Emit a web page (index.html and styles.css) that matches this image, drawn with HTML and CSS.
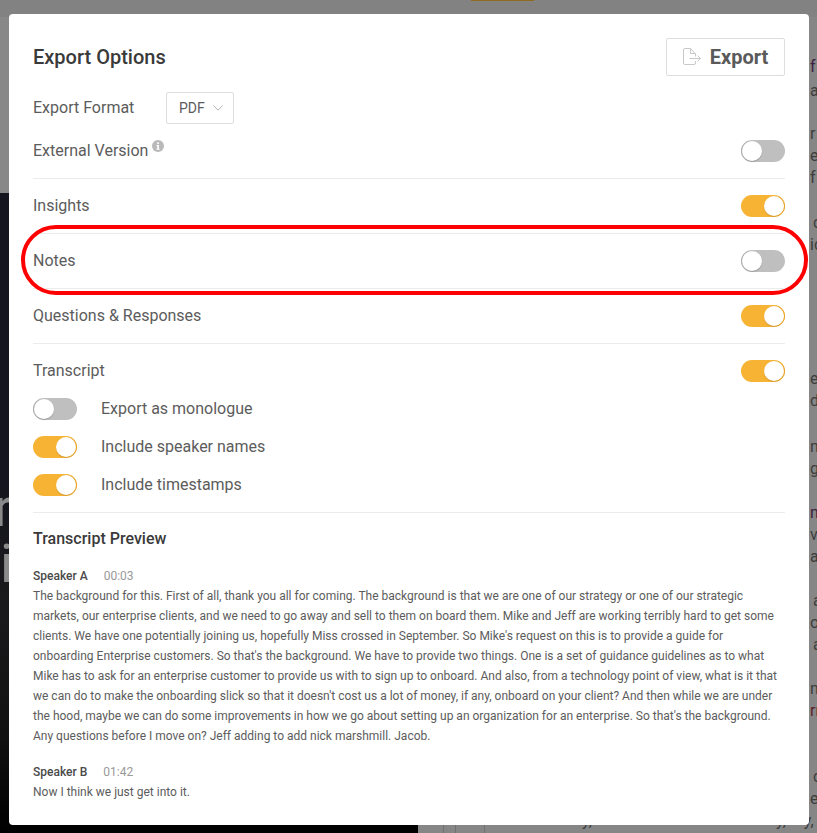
FILE: index.html
```html
<!DOCTYPE html>
<html lang="en">
<head>
<meta charset="utf-8">
<title>Export Options</title>
<link rel="stylesheet" href="styles.css">
</head>
<body>
<div class="backdrop">
  <div class="topbar"><span class="tab"></span></div>
  <div class="bg-main">
    <div class="bg-left">
      <div class="bg-left-top"></div>
      <div class="video"><span class="video-text">r<br>i</span></div>
    </div>
    <div class="bg-right">
      <div class="frag-group g1"><p><b class="purple">f</b></p><p>a</p></div>
      <div class="frag-group g2"><p>r <b class="blue">c</b></p><p>e</p><p>f <b class="maroon">r</b></p></div>
      <div class="frag-group g3"><p class="in">c</p><p>ic</p></div>
      <div class="frag-group g4"><p>e</p><p>d <b class="amber">c</b></p></div>
      <div class="frag-group g5"><p>n</p><p>g</p></div>
      <div class="frag-group g7"><p><b class="purple">n</b></p><p>v</p><p>a</p></div>
      <div class="frag-group g7"><p class="in">a</p><p>or</p><p class="in">a</p></div>
      <div class="frag-group g7"><p>nu</p><p><b class="maroon">rr</b></p></div>
      <div class="frag-group g6"><p class="in">c</p><p>ee</p><p class="tail"><span>y,</span><span class="far">y,</span><span>y,</span></p></div>
      <div class="columns"><i></i><i></i><i></i></div>
    </div>
  </div>
</div>

<section class="modal">
  <header class="modal-head">
    <h1 class="title">Export Options</h1>
    <button class="export-btn" type="button">
      <svg class="export-icon" viewBox="0 0 18 18" width="18" height="18" fill="none" stroke="#c9c9c9" stroke-width="1">
        <path d="M12.500 8.500V6L7.500 .5H2A1.500 1.500 0 0 0 .5 2V15A1.500 1.500 0 0 0 2 16.500H11A1.500 1.500 0 0 0 12.500 15V13"/>
        <path d="M7.500 .5V5.500H12.500"/>
        <path d="M6.500 10.500H17.500M14.500 7.500L17.500 10.500L14.500 13.500"/>
      </svg>
      <span>Export</span>
    </button>
  </header>

  <div class="format-row">
    <span class="label format-label">Export Format</span>
    <div class="select">
      <span>PDF</span>
      <svg viewBox="0 0 10 6" width="10" height="6" fill="none" stroke="#b5b5b5" stroke-width="1"><path d="M.5 .5L5 5.200L9.500 .5"/></svg>
    </div>
  </div>

  <div class="row ruled">
    <span class="label">External Version<svg class="info" viewBox="0 0 12 12" width="12" height="12"><circle cx="6" cy="6" r="6" fill="#b9b9b9"/><rect x="5.200" y="2.400" width="1.700" height="1.700" fill="#fff"/><path d="M4.600 5H6.900V8.700H7.600V9.700H4.500V8.700H5.200V6H4.600Z" fill="#fff"/></svg></span>
    <span class="toggle"></span>
  </div>
  <div class="row ruled">
    <span class="label">Insights</span>
    <span class="toggle on"></span>
  </div>
  <div class="row ruled">
    <span class="label">Notes</span>
    <span class="toggle"></span>
  </div>
  <div class="row ruled">
    <span class="label">Questions &amp; Responses</span>
    <span class="toggle on"></span>
  </div>

  <div class="transcript-group">
    <div class="row">
      <span class="label">Transcript</span>
      <span class="toggle on"></span>
    </div>
    <div class="sub-list">
      <div class="sub-row"><span class="toggle"></span><span class="label">Export as monologue</span></div>
      <div class="sub-row"><span class="toggle on"></span><span class="label">Include speaker names</span></div>
      <div class="sub-row"><span class="toggle on"></span><span class="label">Include timestamps</span></div>
    </div>
  </div>

  <h2 class="preview-title">Transcript Preview</h2>

  <article class="utterance">
    <div class="speaker"><strong>Speaker A</strong><time>00:03</time></div>
    <p>The background for this. First of all, thank you all for coming. The background is that we are one of our strategy or one of our strategic<br>markets, our enterprise clients, and we need to go away and sell to them on board them. Mike and Jeff are working terribly hard to get some<br>clients. We have one potentially joining us, hopefully Miss crossed in September. So Mike's request on this is to provide a guide for<br>onboarding Enterprise customers. So that's the background. We have to provide two things. One is a set of guidance guidelines as to what<br>Mike has to ask for an enterprise customer to provide us with to sign up to onboard. And also, from a technology point of view, what is it that<br>we can do to make the onboarding slick so that it doesn't cost us a lot of money, if any, onboard on your client? And then while we are under<br>the hood, maybe we can do some improvements in how we go about setting up an organization for an enterprise. So that's the background.<br>Any questions before I move on? Jeff adding to add nick marshmill. Jacob.</p>
  </article>
  <article class="utterance second">
    <div class="speaker"><strong>Speaker B</strong><time>01:42</time></div>
    <p>Now I think we just get into it.</p>
  </article>

  <div class="highlight-ring"></div>
</section>
</body>
</html>
```

FILE: styles.css
```css
* { box-sizing: border-box; }
html, body { margin: 0; padding: 0; }
body {
  width: 817px;
  height: 833px;
  overflow: hidden;
  position: relative;
  font-family: Roboto, "Liberation Sans", sans-serif;
  background: #868686;
}

/* dimmed page behind the dialog */
.backdrop { height: 833px; display: flex; flex-direction: column; background: #868686; }
.topbar { height: 17px; flex: none; background: #828282; padding-left: 471px; }
.tab { display: block; width: 63px; height: 1px; background: #8f6a1f; }
.bg-main { flex: 1; display: flex; min-height: 0; }
.bg-left { width: 418px; flex: none; display: flex; flex-direction: column; }
.bg-left-top { height: 176px; flex: none; background: #888; }
.video {
  flex: 1;
  background: linear-gradient(#15151f 0, #15151f 45%, #1a1a1c 65%, #111 85%, #000 100%);
  color: #8a8a8a;
  overflow: hidden;
  font-size: 54px;
  line-height: 56px;
  padding-top: 287px;
  text-indent: -6px;
}
.video-text { display: block; }
.bg-right {
  flex: 1;
  position: relative;
  overflow: hidden;
  padding-left: 392px;
  color: #3d3d3d;
  font-size: 16px;
  line-height: 22px;
  white-space: nowrap;
}
.frag-group p { margin: 0; height: 22px; }
.frag-group b { font-weight: 400; }
.frag-group .in { padding-left: 3px; }
.g1 { margin-top: 39px; }
.g1 p + p { margin-top: 2px; }
.g2 { margin-top: 21px; }
.g3 { margin-top: 23px; }
.g4 { margin-top: 112px; }
.g5 { margin-top: 24px; }
.g7 { margin-top: 22px; }
.g6 { margin-top: 44px; }
.purple { color: #3b2040; }
.blue { color: #2f3f55; }
.maroon { color: #5a1f2c; }
.amber { color: #7a5a1c; }
.frag-group .tail { margin-left: -228px; display: flex; }
.frag-group .tail .far { margin: 0 18px 0 184px; }
.columns { position: absolute; left: 25px; bottom: 0; width: 42px; height: 8px; display: flex; justify-content: space-between; }
.columns i { width: 1px; background: #707070; }
.columns i:nth-child(2) { margin-left: -18px; }

/* dialog */
.modal {
  position: absolute;
  left: 9px;
  top: 14px;
  width: 800px;
  height: 811px;
  padding: 24px;
  background: #fff;
  border-radius: 4px;
  color: #5c5c5c;
}
.modal-head { display: flex; align-items: center; justify-content: space-between; height: 38px; }
.title { margin: 0; font-size: 20px; font-weight: 500; color: #3a3a3a; }
.export-btn {
  width: 119px;
  height: 38px;
  display: flex;
  align-items: center;
  justify-content: center;
  gap: 9px;
  padding: 0;
  background: #fff;
  border: 1px solid #dedede;
  border-radius: 2px;
  color: #5a5a5a;
  font: 700 20px Roboto, sans-serif;
}
.export-icon { flex: none; }
.format-row { display: flex; align-items: center; margin-top: 16px; height: 32px; }
.format-label { width: 133px; }
.select {
  width: 68px;
  height: 32px;
  display: flex;
  align-items: center;
  gap: 8px;
  padding-left: 12px;
  border: 1px solid #dedede;
  border-radius: 2px;
  font-size: 14px;
  color: #5c5c5c;
}
.label { font-size: 16px; line-height: 22px; color: #5c5c5c; }
.info { margin-left: 4px; vertical-align: 4px; }
.row { display: flex; align-items: center; justify-content: space-between; padding: 16px 0; }
.ruled { border-bottom: 1px solid #ececec; }
.transcript-group { border-bottom: 1px solid #ececec; padding-bottom: 16px; }
.sub-list { display: flex; flex-direction: column; gap: 16px; }
.sub-row { display: flex; align-items: center; gap: 24px; }

.toggle {
  display: block;
  flex: none;
  position: relative;
  width: 44px;
  height: 22px;
  border-radius: 11px;
  background: #bfbfbf;
}
.toggle::after {
  content: "";
  position: absolute;
  top: 1px;
  left: 1px;
  width: 20px;
  height: 20px;
  border-radius: 50%;
  background: #fff;
  box-shadow: -1px 0 0 #a9a9a9, 0 1px 1px rgba(0,0,0,.2);
}
.toggle.on { background: #f7b334; }
.toggle.on::after { left: 23px; box-shadow: 1px 0 0 #e5a228, 0 1px 1px rgba(0,0,0,.15); }

.preview-title { margin: 16px 0 0; font-size: 16px; line-height: 20px; font-weight: 500; color: #3a3a3a; }
.utterance { margin-top: 17px; font-size: 12px; line-height: 20px; color: #5c5c5c; }
.utterance.second { margin-top: 16px; }
.utterance p { margin: 0; white-space: nowrap; }
.speaker { display: flex; gap: 16px; }
.speaker strong { font-weight: 500; color: #4a4a4a; }
.speaker time { color: #999; }

.highlight-ring {
  position: absolute;
  left: 12px;
  top: 211px;
  width: 787px;
  height: 70px;
  border: 4px solid #f00;
  border-radius: 35px / 35px;
  pointer-events: none;
}
```
